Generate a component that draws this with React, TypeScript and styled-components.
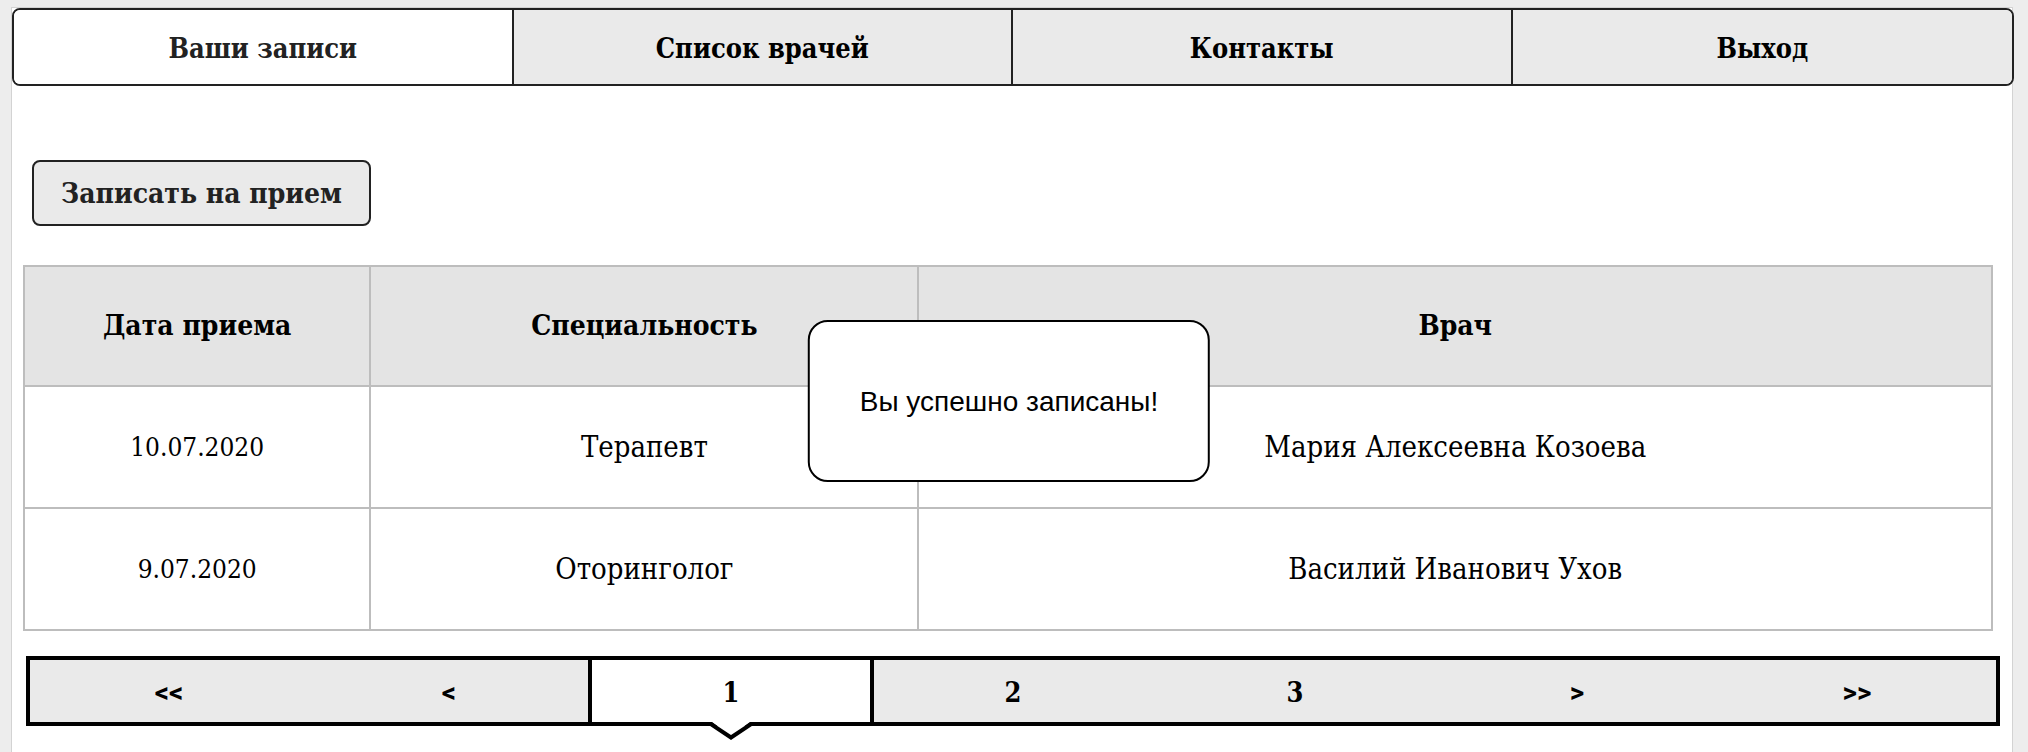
import React from 'react';
import styled, { createGlobalStyle } from 'styled-components';

const slab = '"Roboto Slab", "DejaVu Serif Condensed", "DejaVu Serif", serif';

const GlobalStyle = createGlobalStyle`
  *, *::before, *::after { box-sizing: border-box; }
  body {
    margin: 0;
    background: #ededed;
    color: #000;
    font: 400 28px/34px ${slab};
  }
  #root { min-height: 100vh; display: flex; }
`;

const Page = styled.main`
  position: relative;
  flex: 1;
  margin: 7px 15px 0 11px;
  border: 1px solid #d3d3d3;
  border-bottom: 0;
  background: #fff;
`;

const Tabs = styled.nav`
  display: grid;
  grid-template-columns: repeat(4, minmax(0, 1fr));
  margin-right: -2px;
  border: 2px solid #222;
  border-radius: 8px;
  overflow: hidden;
`;

const Tab = styled.a<{ $active?: boolean }>`
  padding: 22px 8px 18px;
  border-right: 2px solid #222;
  background: ${(p) => (p.$active ? '#fff' : '#eaeaea')};
  color: ${(p) => (p.$active ? '#222' : '#000')};
  font-size: 27px;
  font-weight: 700;
  text-align: center;
  text-decoration: none;

  &:last-child { border-right: 0; }
`;

const BookButton = styled.button`
  display: block;
  margin: 74px 0 39px 20px;
  padding: 15px 27px 13px;
  border: 2px solid #222;
  border-radius: 8px;
  background: #eaeaea;
  color: #222;
  font: 700 28px/34px ${slab};
  cursor: pointer;
`;

const TableWrap = styled.div`
  margin: 0 19px 0 11px;
`;

const Table = styled.table`
  width: 100%;
  border-collapse: collapse;
  table-layout: fixed;
  text-align: center;
`;

const Column = styled.col<{ $share: number }>`
  width: ${(p) => p.$share}%;
`;

const HeadCell = styled.th`
  height: 120px;
  padding: 0;
  border: 2px solid #bdbdbd;
  background: #e4e4e4;
  font-weight: 700;
`;

const Cell = styled.td<{ $numeric?: boolean }>`
  height: 122px;
  padding: 0;
  border: 2px solid #bdbdbd;
  font-size: ${(p) => (p.$numeric ? '26px' : '29px')};
`;

const Pager = styled.nav`
  display: grid;
  grid-template-columns: repeat(7, minmax(0, 1fr));
  margin: 25px 12px 26px 14px;
`;

const PageLink = styled.a<{ $active?: boolean; $arrow?: boolean }>`
  position: relative;
  margin: ${(p) => (p.$active ? '0 -2px' : '0')};
  padding: 16px 0 12px;
  border: solid #000;
  border-width: ${(p) => (p.$active ? '4px' : '4px 0')};
  background: ${(p) => (p.$active ? '#fff' : '#eaeaea')};
  z-index: ${(p) => (p.$active ? 1 : 0)};
  color: #000;
  font-family: ${(p) => (p.$arrow ? 'Roboto, sans-serif' : slab)};
  font-size: ${(p) => (p.$arrow ? '28px' : '27px')};
  font-weight: 700;
  text-align: center;
  text-decoration: none;

  &:first-child { border-left-width: 4px; }
  &:last-child { border-right-width: 4px; }
`;

const Pointer = styled.svg`
  position: absolute;
  top: 100%;
  left: 50%;
  transform: translateX(-50%);
`;

const Toast = styled.div`
  position: absolute;
  top: 312px;
  left: 50%;
  transform: translateX(-50%);
  margin-left: -3px;
  padding: 63px 50px 61px;
  border: 2px solid #000;
  border-radius: 20px;
  background: #fff;
  font: 400 28px/34px "Liberation Sans", Arial, sans-serif;
  white-space: nowrap;
  z-index: 2;
`;

const tabs = ['Ваши записи', 'Список врачей', 'Контакты', 'Выход'];
const pages = ['<<', '<', '1', '2', '3', '>', '>>'];
const visits = [
  { date: '10.07.2020', specialty: 'Терапевт', doctor: 'Мария Алексеевна Козоева' },
  { date: '9.07.2020', specialty: 'Оторинголог', doctor: 'Василий Иванович Ухов' },
];

export default function App() {
  return (
    <>
      <GlobalStyle />
      <Page>
        <Tabs>
          {tabs.map((name, i) => (
            <Tab key={name} href="#" $active={i === 0}>{name}</Tab>
          ))}
        </Tabs>
        <BookButton type="button">Записать на прием</BookButton>
        <TableWrap>
          <Table>
            <colgroup>
              <Column $share={17.6} />
              <Column $share={27.85} />
              <Column $share={54.55} />
            </colgroup>
            <thead>
              <tr>
                <HeadCell scope="col">Дата приема</HeadCell>
                <HeadCell scope="col">Специальность</HeadCell>
                <HeadCell scope="col">Врач</HeadCell>
              </tr>
            </thead>
            <tbody>
              {visits.map((v) => (
                <tr key={v.date}>
                  <Cell $numeric>{v.date}</Cell>
                  <Cell>{v.specialty}</Cell>
                  <Cell>{v.doctor}</Cell>
                </tr>
              ))}
            </tbody>
          </Table>
        </TableWrap>
        <Pager>
          {pages.map((label) => (
            <PageLink key={label} href="#" $active={label === '1'} $arrow={/[<>]/.test(label)}>
              {label}
              {label === '1' && (
                <Pointer width="44" height="18" viewBox="0 0 44 18" aria-hidden="true">
                  <path d="M3 0H41L22 14Z" fill="#fff" />
                  <path d="M1 1.5L22 15.5L43 1.5" fill="none" stroke="#000" strokeWidth="4" />
                </Pointer>
              )}
            </PageLink>
          ))}
        </Pager>
        <Toast role="status">Вы успешно записаны!</Toast>
      </Page>
    </>
  );
}
